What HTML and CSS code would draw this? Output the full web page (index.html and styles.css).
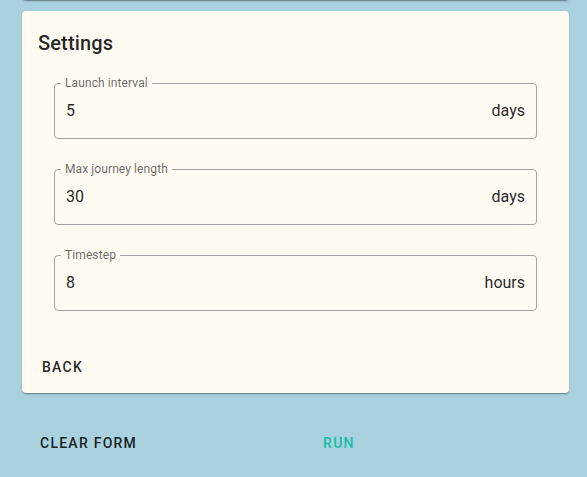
FILE: index.html
```html
<!DOCTYPE html>
<html lang="en">
<head>
<meta charset="utf-8">
<title>Settings</title>
<link rel="stylesheet" href="styles.css">
</head>
<body>
<div class="page">
  <div class="prev-card"></div>
  <section class="card">
    <div class="card-content">
      <h2 class="title">Settings</h2>
      <fieldset class="field">
        <legend class="label">Launch interval</legend>
        <div class="field-row"><span class="value">5</span><span class="unit">days</span></div>
      </fieldset>
      <fieldset class="field">
        <legend class="label">Max journey length</legend>
        <div class="field-row"><span class="value">30</span><span class="unit">days</span></div>
      </fieldset>
      <fieldset class="field">
        <legend class="label">Timestep</legend>
        <div class="field-row"><span class="value">8</span><span class="unit">hours</span></div>
      </fieldset>
    </div>
    <div class="card-actions">
      <button class="btn back">Back</button>
    </div>
  </section>
  <div class="actions">
    <button class="btn clear">Clear form</button>
    <button class="btn run">Run</button>
  </div>
</div>
</body>
</html>
```

FILE: styles.css
```css
html, body {
  margin: 0;
  padding: 0;
  background: #a9d1de;
  font-family: Roboto, "Liberation Sans", sans-serif;
  color: rgba(0, 0, 0, 0.87);
}

.page {
  padding: 0 18px 0 22px;
}

.prev-card {
  height: 10px;
  margin-top: -10px;
  background: #fffbf3;
  border-radius: 0 0 4px 4px;
  box-shadow: 0 2px 1px -1px rgba(0,0,0,.2), 0 1px 1px 0 rgba(0,0,0,.14), 0 1px 3px 0 rgba(0,0,0,.12);
}

.card {
  margin-top: 11px;
  background: #fffbf3;
  border-radius: 4px;
  box-shadow: 0 2px 1px -1px rgba(0,0,0,.2), 0 1px 1px 0 rgba(0,0,0,.14), 0 1px 3px 0 rgba(0,0,0,.12);
}

.card-content {
  padding: 16px 32px 0 16px;
  display: flex;
  flex-direction: column;
}

.title {
  margin: 0 0 17px 0;
  font-size: 20px;
  font-weight: 500;
  line-height: 32px;
  letter-spacing: 0.15px;
  color: rgba(0, 0, 0, 0.87);
}

.field {
  margin: 0 0 23px 16px;
  padding: 0 11px;
  min-width: 0;
  border: 1px solid #a3a3a3;
  border-radius: 4px;
}

.field:last-child {
  margin-bottom: 0;
}

.label {
  margin-left: -5px;
  padding: 0 4px;
  font-size: 12px;
  line-height: 15px;
  color: rgba(0, 0, 0, 0.6);
  letter-spacing: 0.1px;
}

.field-row {
  box-sizing: border-box;
  height: 47px;
  padding-bottom: 8px;
  display: flex;
  align-items: center;
  justify-content: space-between;
  font-size: 16px;
  color: rgba(0, 0, 0, 0.87);
}

.card-actions {
  padding: 38px 8px 8px 12px;
  display: flex;
}

.btn {
  font-family: Roboto, "Liberation Sans", sans-serif;
  font-size: 14px;
  font-weight: 500;
  letter-spacing: 1.25px;
  text-transform: uppercase;
  background: none;
  border: none;
  height: 36px;
  padding: 0 8px;
  color: rgba(0, 0, 0, 0.87);
  cursor: pointer;
}

.actions {
  margin-top: 32px;
  display: flex;
  padding-left: 10px;
}

.run {
  margin-left: 170px;
  color: #19bda5;
}
```
